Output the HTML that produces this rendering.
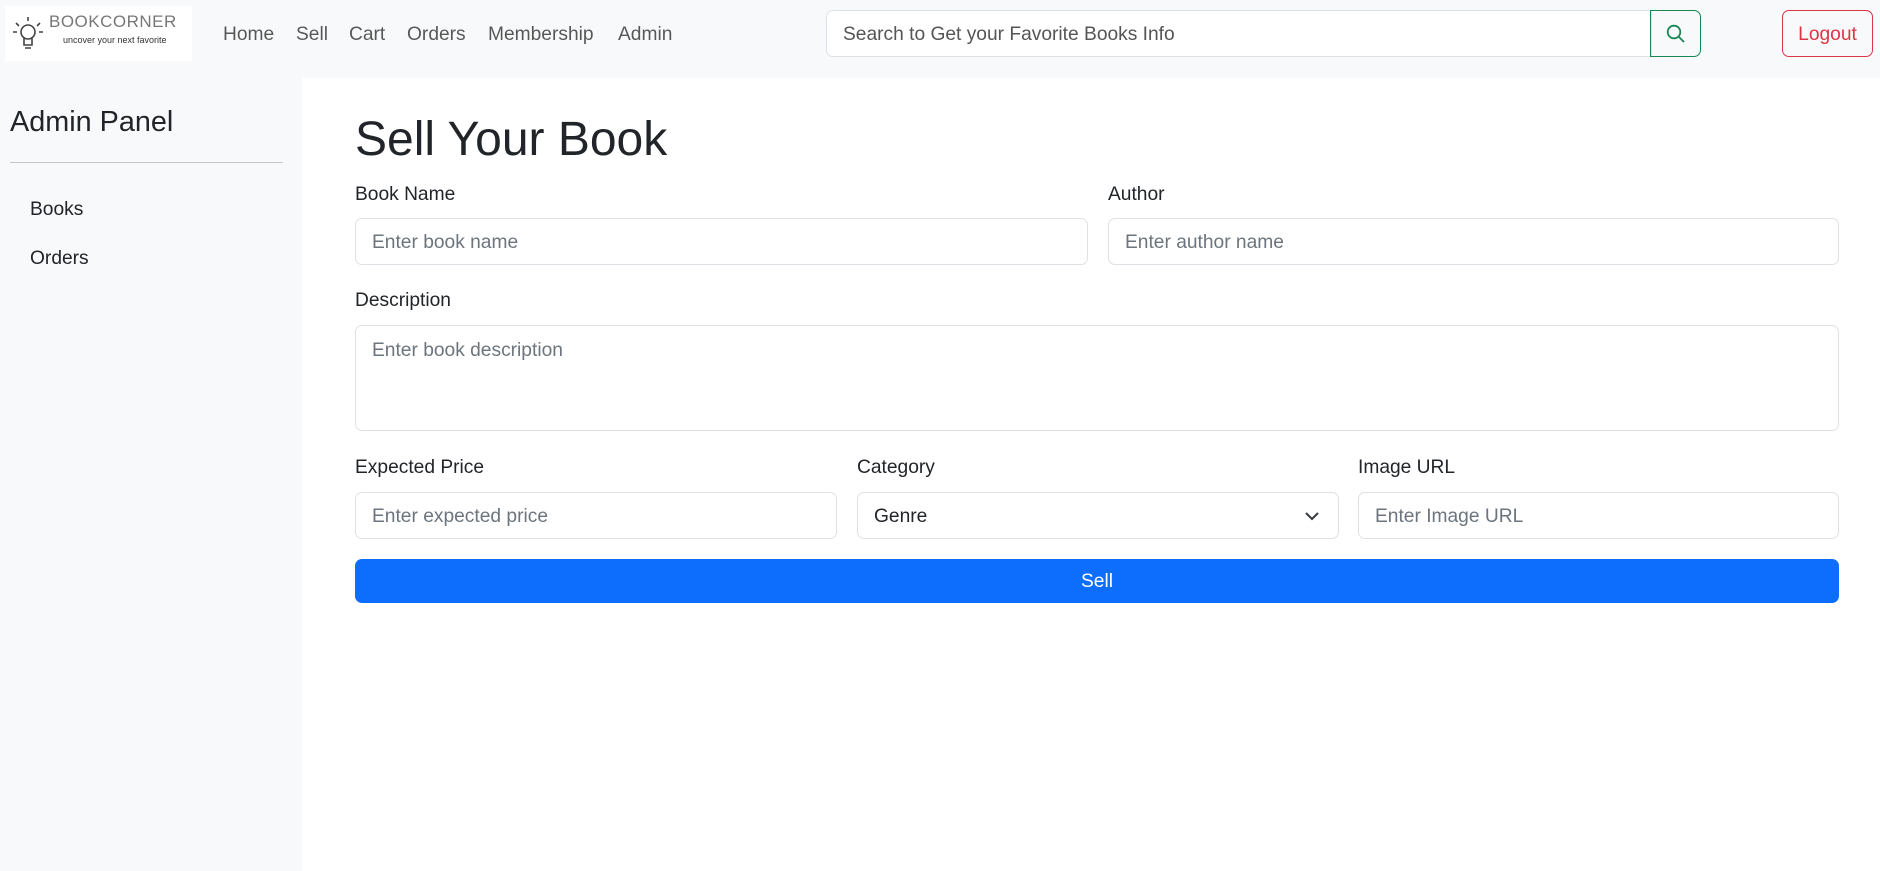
<!DOCTYPE html>
<html><head><meta charset="utf-8"><style>
*{box-sizing:border-box;margin:0;padding:0}
body{width:1880px;height:871px;font-family:"Liberation Sans",sans-serif;color:#212529;background:#fff;position:relative;overflow:hidden;font-size:19.2px}
.nav{position:absolute;left:0;top:0;width:1880px;height:78px;background:#f8f9fa}
.abs{position:absolute}
.navlink{position:absolute;top:24px;color:rgba(0,0,0,.65);font-size:19.2px}
.side{position:absolute;left:0;top:78px;width:302px;height:793px;background:#f8f9fa}
.inp{position:absolute;border:1px solid #dee2e6;border-radius:7px;background:#fff;color:#6c757d;padding-left:16px;padding-top:2px;display:flex;align-items:center;font-size:19.2px}
.lbl{position:absolute;font-size:19.2px;color:#212529}
</style></head><body>
<div class="nav">
 <div class="abs" style="left:5px;top:6px;width:187px;height:55px;background:#fff">
  <svg class="abs" style="left:6px;top:8px" width="34" height="40" viewBox="0 0 34 40" fill="none" stroke="#444" stroke-width="1.6"><circle cx="17" cy="18" r="7"/><path d="M13 24v7h8v-7M14 34h6M17 3v4M5 9l3 3M29 9l-3 3M2 18h4M28 18h4"/></svg>
  <div class="abs" style="left:44px;top:6px;font-size:17px;letter-spacing:0.5px;color:#777;font-weight:300">BOOKCORNER</div>
  <div class="abs" style="left:58px;top:29px;font-size:9px;color:#333">uncover your next favorite</div>
 </div>
 <span class="navlink" style="left:223px">Home</span>
 <span class="navlink" style="left:296px">Sell</span>
 <span class="navlink" style="left:349px">Cart</span>
 <span class="navlink" style="left:407px">Orders</span>
 <span class="navlink" style="left:488px">Membership</span>
 <span class="navlink" style="left:618px">Admin</span>
 <div class="inp" style="left:826px;top:10px;width:826px;height:47px;border-radius:7px 0 0 7px;color:#555">Search to Get your Favorite Books Info</div>
 <div class="abs" style="left:1650px;top:10px;width:51px;height:47px;border:1px solid #198754;border-radius:0 7px 7px 0">
  <svg class="abs" style="left:15px;top:13px" width="20" height="20" viewBox="0 0 20 20" fill="none" stroke="#198754" stroke-width="1.8"><circle cx="8" cy="8" r="6.3"/><path d="M12.6 12.6l5.4 5.4"/></svg>
 </div>
 <div class="abs" style="left:1782px;top:10px;width:91px;height:47px;border:1px solid #dc3545;border-radius:7px;color:#dc3545;display:flex;align-items:center;justify-content:center;padding-top:2px">Logout</div>
</div>
<div class="side">
 <div class="abs" style="left:10px;top:28px;font-size:28.8px">Admin Panel</div>
 <div class="abs" style="left:10px;top:84px;width:273px;height:1px;background:#c5c7c9"></div>
 <div class="abs" style="left:30px;top:121px">Books</div>
 <div class="abs" style="left:30px;top:170px">Orders</div>
</div>
<div class="abs" style="left:355px;top:112px;font-size:48px;font-weight:500">Sell Your Book</div>
<div class="lbl" style="left:355px;top:184px">Book Name</div>
<div class="lbl" style="left:1108px;top:184px">Author</div>
<div class="inp" style="left:355px;top:218px;width:733px;height:47px">Enter book name</div>
<div class="inp" style="left:1108px;top:218px;width:731px;height:47px">Enter author name</div>
<div class="lbl" style="left:355px;top:290px">Description</div>
<div class="inp" style="left:355px;top:325px;width:1484px;height:106px;align-items:flex-start;padding-top:14px">Enter book description</div>
<div class="lbl" style="left:355px;top:457px">Expected Price</div>
<div class="lbl" style="left:857px;top:457px">Category</div>
<div class="lbl" style="left:1358px;top:457px">Image URL</div>
<div class="inp" style="left:355px;top:492px;width:482px;height:47px">Enter expected price</div>
<div class="inp" style="left:857px;top:492px;width:482px;height:47px;color:#212529">Genre
 <svg class="abs" style="right:18px;top:17px" width="16" height="12" viewBox="0 0 16 12" fill="none" stroke="#343a40" stroke-width="2"><path d="M2 3l6 6 6-6"/></svg></div>
<div class="inp" style="left:1358px;top:492px;width:481px;height:47px">Enter Image URL</div>
<div class="abs" style="left:355px;top:559px;width:1484px;height:44px;background:#0d6efd;border-radius:7px;color:#fff;display:flex;align-items:center;justify-content:center;padding-top:2px">Sell</div>
</body></html>
